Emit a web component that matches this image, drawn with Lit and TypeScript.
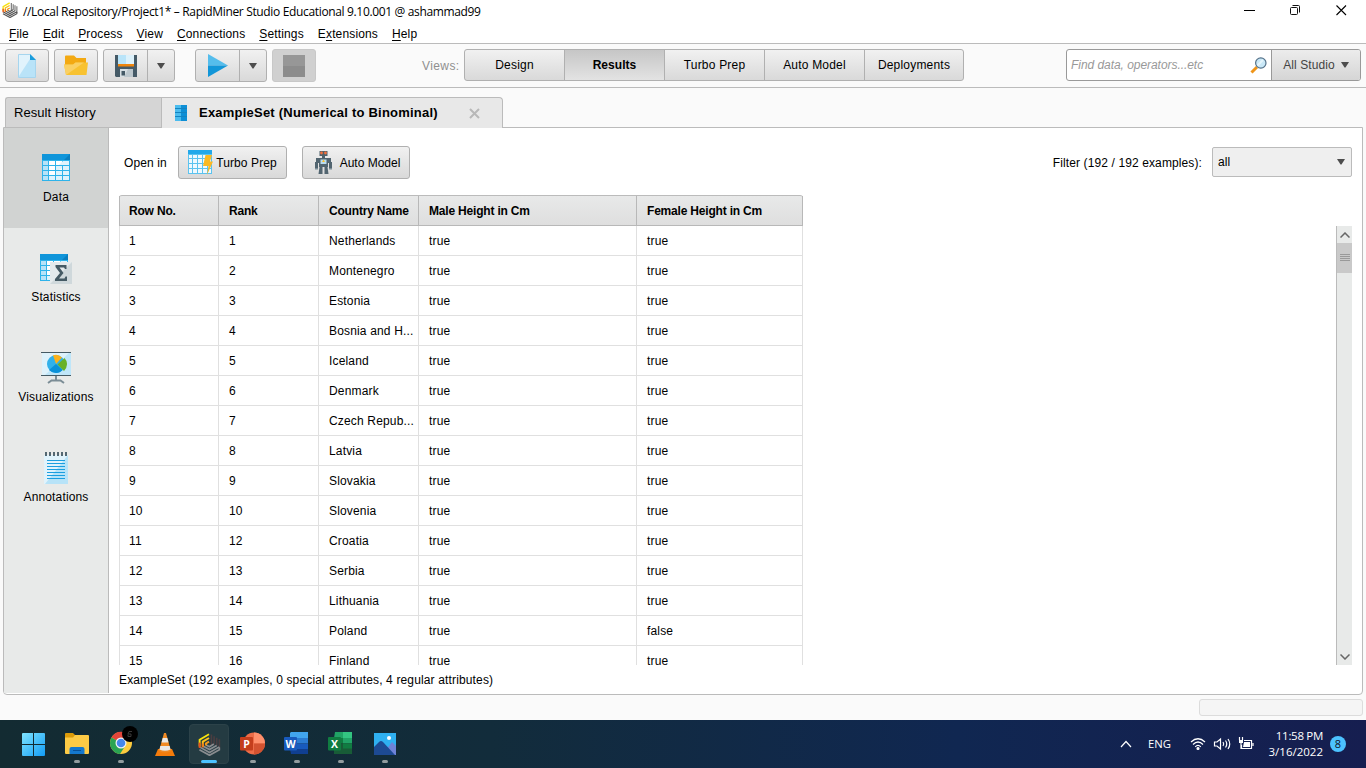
import { LitElement, html, css, svg } from "lit";
import { customElement } from "lit/decorators.js";

const rows: string[][] = [
  ["1", "1", "Netherlands", "true", "true"],
  ["2", "2", "Montenegro", "true", "true"],
  ["3", "3", "Estonia", "true", "true"],
  ["4", "4", "Bosnia and H...", "true", "true"],
  ["5", "5", "Iceland", "true", "true"],
  ["6", "6", "Denmark", "true", "true"],
  ["7", "7", "Czech Repub...", "true", "true"],
  ["8", "8", "Latvia", "true", "true"],
  ["9", "9", "Slovakia", "true", "true"],
  ["10", "10", "Slovenia", "true", "true"],
  ["11", "12", "Croatia", "true", "true"],
  ["12", "13", "Serbia", "true", "true"],
  ["13", "14", "Lithuania", "true", "true"],
  ["14", "15", "Poland", "true", "false"],
  ["15", "16", "Finland", "true", "true"],
];

const menus = ["_File", "_Edit", "_Process", "_View", "_Connections", "_Settings", "E_xtensions", "_Help"];

const arrow = html`<svg width="8" height="6" viewBox="0 0 8 6"><path d="M0 0H8L4.5 5.5h-1z" fill="#4d4d4d"/></svg>`;

const logo = (size: number, grey: string, grey2: string) => html`<svg width=${size} height=${size} viewBox="0 0 24 24" fill="none" stroke-width="1.7">
  <path d="M14 1.500V13M16.800 3.500V12M19.500 5V13.500M22.300 6.500V16" stroke=${grey2}/>
  <path d="M1.500 17.500L12 23.300L22.300 17.500V15M1.500 14.500L12 20.300L22.300 14.500M5 13.500L12 17.300L19.500 13M8.500 12.500L12 14.300L16.500 11.500" stroke=${grey}/>
  <path d="M1.700 14V7L11.500 1.300" stroke="#f7e10c" stroke-width="2"/><path d="M5 14V9L11.500 5.200" stroke="#fbc01b" stroke-width="2"/>
  <path d="M8.300 13V11L11.500 9" stroke="#f39a1a" stroke-width="2"/><path d="M1.700 15.500V10" stroke="#e8501e" stroke-width="2"/><path d="M5 15V11" stroke="#ee7a1b" stroke-width="2"/>
</svg>`;

const icons = {
  file: html`<svg width="18" height="24" viewBox="0 0 18 24"><path d="M.5.500H12L17.500 6V23.500H.5z" fill="#b9e3f8" stroke="#a6d5ee"/><path d="M1 1H12V5L1 22z" fill="#e1f3fc"/><path d="M12 0L18 6H12z" fill="#1a9cdc"/></svg>`,
  folder: html`<svg width="24" height="21" viewBox="0 0 24 21"><path d="M1 20V1.500Q1 .5 2 .500H10L12.500 3H22V12H1z" fill="#f3a912"/><path d="M0 9.500H9L11.500 7.500H24L22.500 20H2z" fill="#f8c231"/><path d="M0 9.500H9L11.500 7.500H20L2 20z" fill="#fad063"/></svg>`,
  save: html`<svg width="22" height="22" viewBox="0 0 22 22"><path d="M0 0H22V22H1L0 21z" fill="#455a67"/><path d="M3 0H19V11H3z" fill="#b9e4f9"/><path d="M11 0H19V9H11z" fill="#dcf1fb"/><path d="M3 9H19V11.500H3z" fill="#ef850d"/><path d="M5 14H18V22H5z" fill="#d7dfe3"/><path d="M13 14H18V22H9z" fill="#bcc7cd"/><path d="M6.500 16H10V20.500H6.500z" fill="#455a67"/></svg>`,
  play: html`<svg width="20" height="23" viewBox="0 0 20 23"><path d="M0 0L20 11.500H0z" fill="#55bdec"/><path d="M0 11.500H20L0 23z" fill="#1296d8"/></svg>`,
  stop: html`<svg width="22" height="22"><path d="M0 0H22V22H0z" fill="#8c8c8c"/><path d="M0 0H22V11H0z" fill="#979797"/></svg>`,
  column: html`<svg width="12" height="16"><path d="M0 0H12V16H0z" fill="#4bbcee"/><path d="M6 0H12V16H6z" fill="#0e8fd6"/><path d="M0 3.500H12M0 7.500H12M0 11.500H12" stroke="#1483c0"/></svg>`,
  search: html`<svg width="17" height="17" viewBox="0 0 17 17"><path d="M1.500 15.500L7 10" stroke="#ef9519" stroke-width="3"/><circle cx="10.800" cy="6" r="5.200" fill="#c9e8f7" stroke="#55728a" stroke-width="1.200"/><path d="M7.500 8.500L13 3" stroke="#e5f5fc" stroke-width="2"/></svg>`,
};

const grid = svg`<path d="M0 0H28V27H0z" fill="#2fb3ea"/><path d="M0 0H28V6H0z" fill="#0f95da"/><path d="M22 6L28 0V6z" fill="#087fc0"/>
 <path d="M1 7h5v4H1zM1 12h5v4H1zM1 17h5v4H1zM1 22h5v4H1z" fill="#b7e3f8"/>
 <path d="M7 7h6v4H7zM14 7h6v4H14zM21 7h6v4H21zM7 12h6v4H7zM14 12h6v4H14zM21 12h6v4H21zM7 17h6v4H7zM14 17h6v4H14zM21 17h6v4H21zM7 22h6v4H7zM14 22h6v4H14zM21 22h6v4H21z" fill="#fff"/>
 <path d="M21 7h6v4H17l4-4zM14 12h6v2l-3 2h-3zM21 12h6v4H21zM14 17h6v4H14zM21 17h6v4H21zM7 22h6v4H7zM14 22h6v4H14zM21 22h6v4H21z" fill="#dff3fc"/>`;

const sideItems = [
  { label: "Data", icon: html`<svg width="32" height="32" viewBox="0 0 32 32"><g transform="translate(2 2)">${grid}</g></svg>` },
  {
    label: "Statistics",
    icon: html`<svg width="32" height="32" viewBox="0 0 32 32"><g transform="translate(0 2)">${grid}</g><path d="M10 10H32V32H10z" fill="#cfd8db"/><path d="M10 10H32L10 32z" fill="#e4eaec"/>
      <path d="M15.500 13H26.500V17H25L24 15.500H19.500L23.500 21L19 26.500H24.500L25.500 24.500H27V29H15V27L20 21L15.500 15z" fill="#455a64"/></svg>`,
  },
  {
    label: "Visualizations",
    icon: html`<svg width="32" height="32" viewBox="0 0 32 32"><path d="M2 1H31V23H2z" fill="#bfe6f9"/><path d="M2 1H29L5 23H2z" fill="#def2fb"/><path d="M1 0H31V1H1zM1 23H31V24H1z" fill="#455a64"/>
      <circle cx="16" cy="12" r="9" fill="#31b1ea"/><path d="M16 12L9 18Q12 21 16 21T22.500 18z" fill="#0b91d8"/><path d="M16 12L13 3.300Q18 1.500 22 5.500z" fill="#fbb11b"/><path d="M17.500 12.500L24.500 6Q30 12 24 19z" fill="#68b129"/>
      <path d="M16 24V28M8 31L11.500 28.500H20.500L24 31" stroke="#7b8d96" stroke-width="2" fill="none"/></svg>`,
  },
  {
    label: "Annotations",
    icon: html`<svg width="32" height="32" viewBox="0 0 32 32"><path d="M4 3H28V32H4z" fill="#b7e3f8"/><path d="M4 3H28L5 32H4z" fill="#e0f3fc"/><path d="M6 0V4M10 0V4M14 0V4M18 0V4M22 0V4M26 0V4" stroke="#546872" stroke-width="2"/>
      <path d="M7 8.500H25M7 11.500H25M7 14.500H25M7 17.500H25M7 20.500H25M7 23.500H25M7 26.500H25" stroke="#1b9fe0"/></svg>`,
  },
];

const turbo = html`<svg width="25" height="25" viewBox="0 0 25 25"><path d="M0 0H24V24H0z" fill="#5cc3ef"/><path d="M0 0H24V4H0z" fill="#22a8ea"/>
 <path d="M1 5h3v3H1zM5 5h4v3H5zM10 5h4v3h-4zM15 5h4v3h-4zM20 5h3v3h-3zM1 9h3v4H1zM5 9h4v4H5zM10 9h4v4h-4zM15 9h4v4h-4zM20 9h3v4h-3zM1 14h3v4H1zM5 14h4v4H5zM10 14h4v4h-4zM15 14h4v4h-4zM20 14h3v4h-3zM1 19h3v4H1zM5 19h4v4H5zM10 19h4v4h-4zM15 19h4v4h-4zM20 19h3v4h-3z" fill="#f0f9fe"/>
 <path d="M17.500 5H24L22 11.500H25L19 25L20.500 16H15z" fill="#fbb922"/></svg>`;

const robot = html`<svg width="17" height="25" viewBox="0 0 17 25"><path d="M4.500 1H12.500V6H4.500zM7 6H10V8H7z" fill="#4f626c"/><path d="M1 8H16V13H1zM4 12H13V17H4zM0 12H3V18H0zM14 12H17V18H14zM4.500 17H7.500V24H3.500zM9.500 17H12.500L13.500 24H9.500z" fill="#526570"/>
 <circle cx="6.500" cy="3" r="1.400" fill="#f3703c"/><circle cx="10.500" cy="3" r="1.400" fill="#f3703c"/><path d="M5.500 9.500H11.500V14H5.500z" fill="#b9dcef"/><path d="M8.500 9.500L10 12H7z" fill="#fbc02d"/><path d="M0 18H3V19.500H0zM14 18H17V19.500H14z" fill="#798b95"/></svg>`;

const office = (back: any, tile: string, letter: string) => html`<svg width="26" height="24" viewBox="0 0 26 24">${back}<rect x="0" y="5" width="13" height="13.500" rx="1" fill=${tile}/><text x="6.500" y="15.500" text-anchor="middle" font-family="Open Sans" font-weight="700" font-size="10.500" fill="#fff">${letter}</text></svg>`;

const tasks = [
  { run: false, icon: html`<svg width="23" height="23" viewBox="0 0 23 23"><defs><linearGradient id="w" x2="1" y2="1"><stop stop-color="#7fe4ff"/><stop offset="1" stop-color="#129cf4"/></linearGradient></defs><path d="M0 1Q0 0 1 0H11V11H0zM12 0H22Q23 0 23 1V11H12zM0 12H11V23H1Q0 23 0 22zM12 12H23V22Q23 23 22 23H12z" fill="url(#w)"/></svg>` },
  { run: true, icon: html`<svg width="24" height="22" viewBox="0 0 24 22"><path d="M0 6V1Q0 0 1 0H8L10.500 2.500L8 6z" fill="#dc9b09"/><path d="M0 4.500H8L10 2H23Q24 2 24 3V20Q24 21 23 21H1Q0 21 0 20z" fill="#fdcb45"/><path d="M4.500 21V16Q4.500 14 6.500 14H17.500Q19.500 14 19.500 16V21z" fill="#1478cd"/><path d="M8 17.500H16" stroke="#075097"/></svg>` },
  { run: true, icon: html`<svg class="chrome" width="28" height="30" viewBox="0 0 28 30"><circle cx="11" cy="18" r="11" fill="#fccb3e"/><path d="M11 18L1.500 12.500A11 11 0 0 1 21 13L11 13z" fill="#e2453a"/><path d="M11 18L1.500 12.500A11 11 0 0 0 10 29L15.500 20.500z" fill="#2aa453"/><circle cx="11" cy="18" r="5.500" fill="#f5f5f5"/><circle cx="11" cy="18" r="4.300" fill="#4587ec"/><circle cx="20" cy="9" r="8" fill="#000"/><path d="M22 6.500h-3l-1 2.500h3v2.500h-3v-2" stroke="#3a3a3a" fill="none"/></svg>` },
  { run: false, icon: html`<svg width="20" height="23" viewBox="0 0 20 23"><path d="M3 16H17L20 23H0z" fill="#f57c0b"/><path d="M9 0H11L16 18Q10 21 4 18z" fill="#f08a24"/><path d="M7.700 5H12.300L13.500 9.500H6.500zM5.300 13H14.700L15.500 16.500Q10 19 4.500 16.500z" fill="#e8e8e8"/></svg>` },
  { run: true, active: true, icon: logo(23, "#8a8d90", "#4a3d40") },
  { run: true, icon: office(svg`<circle cx="14" cy="11.500" r="11" fill="#ed6c47"/><path d="M14 .500A11 11 0 0 1 25 11.500H14z" fill="#ff8f6b"/><path d="M14 11.500H25A11 11 0 0 1 14 22.500z" fill="#d35230"/>`, "#c43e1c", "P") },
  { run: true, icon: office(svg`<path d="M7 0H24V6H6V1z" fill="#41a5ee"/><path d="M6 6H24V11.500H6z" fill="#2b7cd3"/><path d="M6 11.500H24V17H6z" fill="#185abd"/><path d="M6 17H24V22H7z" fill="#103f91"/>`, "#185abd", "W") },
  { run: true, icon: office(svg`<path d="M7 0H15V6H6z" fill="#21a366"/><path d="M15 0H24V6H15z" fill="#33c481"/><path d="M6 6H15V11.500H6z" fill="#107c41"/><path d="M15 6H24V11.500H15z" fill="#21a366"/><path d="M6 11.500H24V22H6z" fill="#185c37"/><path d="M15 11.500H24V16.500H15z" fill="#107c41"/>`, "#107c41", "X") },
  { run: true, icon: html`<svg width="22" height="22" viewBox="0 0 22 22"><path d="M0 0H22V22H0z" fill="#2fb0f1"/><path d="M12 17L18 9L22 13V22H12z" fill="#6e83d8"/><path d="M0 14L5 9Q7 7 9 9L21 22H0z" fill="#1d4a93"/><circle cx="15" cy="5" r="2" fill="#fff"/></svg>` },
];

@customElement("app-root")
export class AppRoot extends LitElement {
  static styles = css`
    :host { display: flex; flex-direction: column; width: 1366px; height: 768px; overflow: hidden; background: #fafafa; color: #000; font: 12px/14px "Liberation Sans", Arial, sans-serif; }
    * { box-sizing: border-box; }
    svg { display: block; flex: none; }
    .title { display: flex; height: 23px; background: #fff; padding: 2px 19px 0 2px; justify-content: space-between; }
    .caption { display: flex; gap: 5px; }
    .caption span { font: 12px/18px "Open Sans", "Noto Sans", sans-serif; letter-spacing: -.345px; white-space: nowrap; padding-top: 1px; }
    .winbtns { display: flex; gap: 35px; padding-top: 2px; }
    .menu { display: flex; height: 21px; background: #fff; border-bottom: 1px solid #bbb; padding: 4px 0 0 9px; gap: 14px; letter-spacing: .145px; }
    .menu u { text-underline-offset: 2px; text-decoration-thickness: 1px; }
    .toolbar { display: flex; height: 44px; border-bottom: 1px solid #bbb; padding: 5px 5px 0; }
    .btn { display: flex; align-items: center; justify-content: center; height: 33px; border: 1px solid #b0b0b0; border-radius: 3px; background: linear-gradient(#f1f1f1, #d9d9d9); }
    .icon { width: 44px; margin-right: 5px; }
    .split { width: 72px; }
    .split > span { display: flex; align-items: center; justify-content: center; height: 31px; width: 44px; border-right: 1px solid #b0b0b0; }
    .split > i { flex: 1; display: flex; justify-content: center; }
    .gap { margin-right: 20px; }
    .btn.off { background: #d0d0d0; border-color: #c8c8c8; }
    .views { color: #8f8f8f; margin: 10px 4px 0 101px; width: 38px; letter-spacing: .4px; }
    .segs { display: flex; width: 500px; height: 32px; overflow: hidden; }
    .segs span { flex: 0 0 100px; display: flex; justify-content: center; align-items: center; border-right: 1px solid #b0b0b0; height: 30px; letter-spacing: .2px; }
    .segs span:last-child { flex-basis: 98px; border: 0; }
    .segs .on { font-weight: bold; letter-spacing: .05px; background: linear-gradient(#c6c6c6, #e3e3e3); }
    .search { display: flex; width: 295px; height: 32px; margin-left: 102px; border: 1px solid #999; border-radius: 3px; overflow: hidden; background: #fff; }
    .search em { display: flex; width: 205px; align-items: center; justify-content: space-between; padding: 0 4px 0 4px; color: #999; letter-spacing: -.05px; border-right: 1px solid #999; }
    .search b { flex: 1; display: flex; align-items: center; justify-content: center; gap: 6px; font-weight: normal; color: #444; letter-spacing: .1px; background: linear-gradient(#ececec, #d5d5d5); }
    .tabs { display: flex; padding: 9px 0 0 5px; height: 39px; }
    .tab { display: flex; align-items: center; border: 1px solid #bbb; border-bottom: 0; height: 30px; font-size: 13px; letter-spacing: .06px; }
    .hist { width: 156px; padding-left: 8px; background: #d5d5d5; border-radius: 3px 0 0 0; border-right: 0; }
    .cur { width: 342px; height: 31px; padding-left: 13px; background: #e8e8e8; font-weight: bold; letter-spacing: .22px; border-radius: 0 4px 0 0; z-index: 1; }
    .cur span { width: 239px; margin: 0 31px 0 12px; white-space: nowrap; }
    .panel { display: flex; width: 1360px; height: 568px; margin-left: 3px; border: 1px solid #bbb; border-radius: 0 0 4px 4px; background: #fff; }
    .side { width: 105px; height: 565px; background: #e8eae9; border-right: 1px solid #bbb; }
    .item { display: flex; flex-direction: column; align-items: center; height: 100px; padding-top: 24px; gap: 6px; letter-spacing: .15px; }
    .item.on { background: #d1d3d2; }
    .main { flex: 1; padding: 18px 10px 0; display: flex; flex-direction: column; }
    .top { display: flex; height: 49px; }
    .open { margin: 10px 11px 0 5px; width: 43px; white-space: nowrap; letter-spacing: .12px; }
    .btn.turbo { width: 109px; gap: 3px; margin-right: 15px; letter-spacing: .1px; }
    .btn.auto { width: 108px; gap: 8px; padding-left: 3px; }
    .filter { margin: 10px 10px 0 auto; white-space: nowrap; letter-spacing: .11px; }
    .select { display: flex; align-items: center; justify-content: space-between; width: 140px; height: 30px; margin-top: 1px; padding: 0 6px 0 5px; border: 1px solid #bbb; border-radius: 2px; background: #efefef; letter-spacing: .1px; }
    .body { display: flex; height: 470px; justify-content: space-between; overflow: hidden; }
    .row { display: grid; grid-template-columns: 100px 100px 100px 218px 166px; height: 30px; letter-spacing: .16px; }
    .row span { display: flex; align-items: center; padding-left: 10px; border-right: 1px solid #e0e0e0; border-bottom: 1px solid #e0e0e0; white-space: nowrap; }
    .row span:first-child { border-left: 1px solid #e0e0e0; padding-left: 9px; }
    .row.head { height: 31px; font-weight: bold; letter-spacing: -.19px; background: linear-gradient(#e8e9e9, #dedede); border-top: 1px solid #bbb; border-radius: 3px 3px 0 0; }
    .row.head span, .row.head span:first-child { border-color: #b8b8b8; }
    .scroll { display: flex; flex-direction: column; align-items: center; width: 17px; height: 439px; margin: 31px -1px 0 0; background: #e8eae9; border-left: 1px solid #bbb; justify-content: space-between; }
    .up { display: flex; flex-direction: column; align-items: center; padding-top: 6px; gap: 5px; width: 100%; }
    .thumb { width: 100%; height: 30px; background: #c9c9c9; display: grid; place-items: center; }
    .down { padding-bottom: 5px; }
    .info { padding-top: 8px; letter-spacing: .145px; }
    .foot { height: 25px; display: flex; justify-content: flex-end; padding: 4px 3px 0 0; }
    .foot div { width: 164px; height: 17px; background: #f5f5f5; border: 1px solid #dcdcdc; border-radius: 3px; }
    .taskbar { display: flex; height: 48px; background: linear-gradient(90deg, #132b32, #122c3b 36%, #102751 70%, #161e50); padding-left: 11px; color: #fff; font: 12px/16px "Open Sans", sans-serif; }
    .task { display: flex; flex-direction: column; align-items: center; justify-content: space-between; width: 44px; height: 44px; }
    .task > div { display: grid; place-items: center; height: 40px; width: 40px; margin-top: 4px; border-radius: 4px; flex: none; }
    .task.act > div { background: #243b42; border: 1px solid #2c4249; }
    .task u { position: relative; top: -4px; width: 6px; height: 3px; border-radius: 2px; background: #929c9f; flex: none; }
    .task.act u { width: 16px; background: #4cc2ff; }
    .chrome { margin: -8px 0 0 6px; }
    .tray { display: flex; align-items: center; margin-left: auto; padding-right: 20px; }
    .eng { margin: 0 18px 0 16px; font-size: 11.300px; width: 24px; }
    .clock { width: 70px; text-align: right; margin-left: -1px; font-size: 11.500px; letter-spacing: -.3px; white-space: nowrap; }
    .clock span { letter-spacing: 0; }
    .badge { width: 16px; height: 16px; border-radius: 8px; background: #4cc2ff; color: #112; text-align: center; margin-left: 7px; font-size: 11px; }
  `;

  render() {
    return html`
      <div class="title">
        <div class="caption">${logo(16, "#555", "#777")}<span>//Local Repository/Project1* – RapidMiner Studio Educational 9.10.001 @ ashammad99</span></div>
        <div class="winbtns">
          <svg width="11" height="12"><path d="M0 6.500H11" stroke="#000"/></svg>
          <svg width="11" height="12" fill="none" stroke="#111"><rect x=".5" y="3.500" width="7" height="7" rx="1"/><path d="M2.500 1.500H8.500Q9.500 1.500 9.500 2.500V8.500"/></svg>
          <svg width="11" height="12"><path d="M.5 1.500L10 11M10 1.500L.5 11" stroke="#000" stroke-width="1.100"/></svg>
        </div>
      </div>
      <div class="menu">${menus.map((m) => { const [a, b] = m.split("_"); return html`<span>${a}<u>${b[0]}</u>${b.slice(1)}</span>`; })}</div>
      <div class="toolbar">
        <div class="btn icon">${icons.file}</div>
        <div class="btn icon">${icons.folder}</div>
        <div class="btn split gap"><span>${icons.save}</span><i>${arrow}</i></div>
        <div class="btn split icon"><span>${icons.play}</span><i>${arrow}</i></div>
        <div class="btn icon off">${icons.stop}</div>
        <div class="views">Views:</div>
        <div class="btn segs"><span>Design</span><span class="on">Results</span><span>Turbo Prep</span><span>Auto Model</span><span>Deployments</span></div>
        <div class="search"><em>Find data, operators...etc ${icons.search}</em><b>All Studio ${arrow}</b></div>
      </div>
      <div class="tabs">
        <div class="tab hist">Result History</div>
        <div class="tab cur">${icons.column}<span>ExampleSet (Numerical to Binominal)</span><svg width="11" height="11"><path d="M1 1L10 10M10 1L1 10" stroke="#b8b8b8" stroke-width="2"/></svg></div>
      </div>
      <div class="panel">
        <div class="side">${sideItems.map((s, i) => html`<div class="item ${i ? "" : "on"}">${s.icon}<span>${s.label}</span></div>`)}</div>
        <div class="main">
          <div class="top">
            <div class="open">Open in</div>
            <div class="btn turbo">${turbo}Turbo Prep</div>
            <div class="btn auto">${robot}Auto Model</div>
            <div class="filter">Filter (192 / 192 examples):</div>
            <div class="select">all ${arrow}</div>
          </div>
          <div class="body">
            <div>
              <div class="row head">${["Row No.", "Rank", "Country Name", "Male Height in Cm", "Female Height in Cm"].map((h) => html`<span>${h}</span>`)}</div>
              ${rows.map((r) => html`<div class="row">${r.map((c) => html`<span>${c}</span>`)}</div>`)}
            </div>
            <div class="scroll">
              <div class="up"><svg width="10" height="6"><path d="M.5 5.500L5 1L9.500 5.500" fill="none" stroke="#666" stroke-width="1.500"/></svg>
                <div class="thumb"><svg width="10" height="8"><path d="M0 .5H10M0 2.500H10M0 4.500H10M0 6.500H10" stroke="#999"/></svg></div></div>
              <svg class="down" width="10" height="11"><path d="M.5 .5L5 5L9.500 .5" fill="none" stroke="#666" stroke-width="1.500"/></svg>
            </div>
          </div>
          <div class="info">ExampleSet (192 examples, 0 special attributes, 4 regular attributes)</div>
        </div>
      </div>
      <div class="foot"><div></div></div>
      <div class="taskbar">
        ${tasks.map((t) => html`<div class="task ${t.active ? "act" : ""}"><div>${t.icon}</div>${t.run ? html`<u></u>` : ""}</div>`)}
        <div class="tray">
          <svg width="12" height="8" fill="none" stroke="#fff" stroke-width="1.200"><path d="M1 7L6 1.500L11 7"/></svg>
          <span class="eng">ENG</span>
          <svg width="64" height="14" viewBox="0 0 64 14" fill="none" stroke="#fff" stroke-width="1.200">
            <path d="M1 5Q8-1.500 15 5M3 7.500Q8 2.500 13 7.500M5.200 9.800Q8 7 10.800 9.800"/><circle cx="8" cy="11.500" r="1" fill="#fff"/>
            <path d="M24.500 5H27L30.500 2V12L27 9H24.500zM33 5Q34.500 7 33 9M35.500 3.500Q38 7 35.500 10.500M38 2Q41.500 7 38 12"/>
            <path d="M54 3.500H61.500V11.500H51.500V8M63 6V9M49.500 0V3M52.500 0V3M51 6V12"/><path d="M49 3H53V6H49zM54 5H60V10H53z" fill="#fff" stroke="none"/>
          </svg>
          <div class="clock">11:58 PM<br /><span>3/16/2022</span></div>
          <div class="badge">8</div>
        </div>
      </div>`;
  }
}
